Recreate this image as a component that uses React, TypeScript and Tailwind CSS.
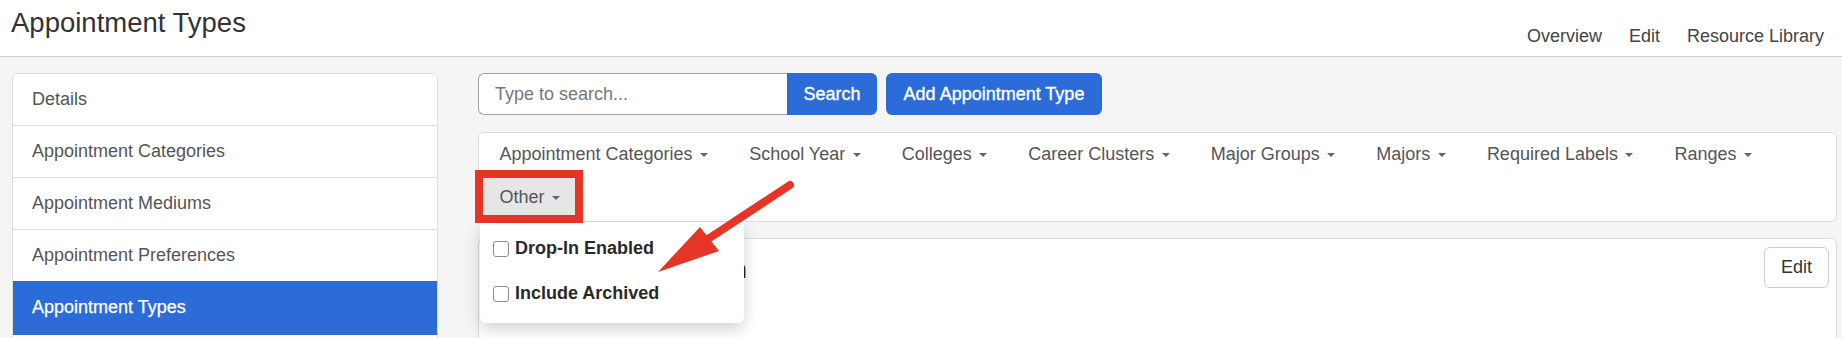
import React from "react";

const sidebarItems = [
  "Details",
  "Appointment Categories",
  "Appointment Mediums",
  "Appointment Preferences",
  "Appointment Types",
  "",
];

const filters = [
  "Appointment Categories",
  "School Year",
  "Colleges",
  "Career Clusters",
  "Major Groups",
  "Majors",
  "Required Labels",
  "Ranges",
];

function Caret() {
  return (
    <span className="ml-[7.5px] inline-block h-0 w-0 border-x-[4px] border-t-[4px] border-x-transparent border-t-[#666]" />
  );
}

export default function App() {
  return (
    <div className="relative h-[338px] w-[1842px] overflow-hidden bg-[#f5f5f5] font-['Liberation_Sans',Arial,sans-serif] text-[#333]">
      {/* Header */}
      <header className="flex h-[57px] items-start justify-between border-b border-[#c8d0d8] bg-white pl-[11px] pr-[18px]">
        <h1 className="mt-[9px] text-[27.5px] leading-[28px] font-normal text-[#333]">
          Appointment Types
        </h1>
        <nav className="mt-[26px] flex gap-[27px] text-[18px] leading-[20px] text-[#444]">
          <span>Overview</span>
          <span>Edit</span>
          <span>Resource Library</span>
        </nav>
      </header>

      {/* Body */}
      <div className="flex gap-[40px] pl-[12px] pr-[5px] pt-[16px]">
        {/* Sidebar */}
        <aside className="w-[426px] shrink-0 overflow-hidden rounded-[6px] border border-[#dddddd] bg-white">
          {sidebarItems.map((item, i) => {
            const active = item === "Appointment Types";
            return (
              <div
                key={i}
                className={
                  active
                    ? "flex h-[54px] -mt-px items-center border-b border-[#2c6cd8] bg-[#2c6cd8] px-[19px] text-[18px] text-white [-webkit-text-stroke:0.25px_white]"
                    : "flex h-[52px] items-center border-b border-[#dddddd] px-[19px] text-[18px] text-[#555]"
                }
              >
                {item}
              </div>
            );
          })}
        </aside>

        {/* Main */}
        <main className="flex min-w-0 flex-1 flex-col">
          {/* Search row */}
          <div className="flex h-[42px] items-stretch">
            <div className="flex w-[309px] items-center rounded-l-[6px] border border-r-0 border-[#a3a3a3] bg-white pl-[16px] text-[18px] text-[#777]">
              Type to search...
            </div>
            <button className="flex w-[90px] items-center justify-center rounded-r-[6px] bg-[#2c6cd8] text-[18px] text-white [-webkit-text-stroke:0.35px_white]">
              Search
            </button>
            <button className="ml-[9px] flex w-[216px] items-center justify-center rounded-[6px] bg-[#2c6cd8] text-[18px] text-white [-webkit-text-stroke:0.35px_white]">
              Add Appointment Type
            </button>
          </div>

          {/* Filter panel */}
          <div className="relative z-20 mt-[17px] flex flex-wrap rounded-[6px] border border-[#dddddd] bg-white pb-[2px]">
            {filters.map((f) => (
              <div
                key={f}
                className="flex h-[43px] items-center px-[20.5px] text-[18px] text-[#555]"
              >
                {f}
                <Caret />
              </div>
            ))}
            <div className="relative flex h-[43px] items-center bg-[#e6e6e6] px-[20.5px] text-[18px] text-[#555]">
              Other
              <Caret />
              {/* Dropdown menu */}
              <div className="absolute left-[1px] top-[calc(100%+3px)] z-30 w-[264px] rounded-b-[6px] bg-white pb-[7px] pt-[4px] shadow-[0_6px_16px_rgba(0,0,0,0.18)]">
                {["Drop-In Enabled", "Include Archived"].map((o) => (
                  <div key={o} className="flex h-[45px] items-center pl-[13px]">
                    <span className="inline-block h-[16px] w-[16px] rounded-[3px] border-[1.5px] border-[#8b8a96] bg-white" />
                    <span className="ml-[6px] text-[18px] font-bold text-[#2a2a2a]">{o}</span>
                  </div>
                ))}
              </div>
            </div>
          </div>

          {/* Content card */}
          <div className="mt-[16px] flex h-[120px] items-start justify-between rounded-[6px] border border-[#dddddd] bg-white pr-[7px] pt-[8px]">
            <h2 className="mt-[6px] w-[268px] whitespace-nowrap text-right text-[26px] leading-[32px] font-bold text-[#222]">
              Career Exploration
            </h2>
            <button className="flex h-[41px] items-center rounded-[6px] border border-[#cccccc] bg-white px-[16px] text-[18px] text-[#333]">
              Edit
            </button>
          </div>
        </main>
      </div>

      {/* Annotation: red box */}
      <div className="pointer-events-none absolute left-[475px] top-[170px] z-40 h-[53px] w-[108px] border-[8px] border-[#e63427]" />

      {/* Annotation: red arrow */}
      <svg
        className="pointer-events-none absolute left-0 top-0 z-40"
        width="1842"
        height="338"
        viewBox="0 0 1842 338"
      >
        <line x1="790" y1="185" x2="708" y2="239" stroke="#e63427" strokeWidth="8" strokeLinecap="round" />
        <polygon points="658,272 700,227 719,251" fill="#e63427" />
      </svg>
    </div>
  );
}
